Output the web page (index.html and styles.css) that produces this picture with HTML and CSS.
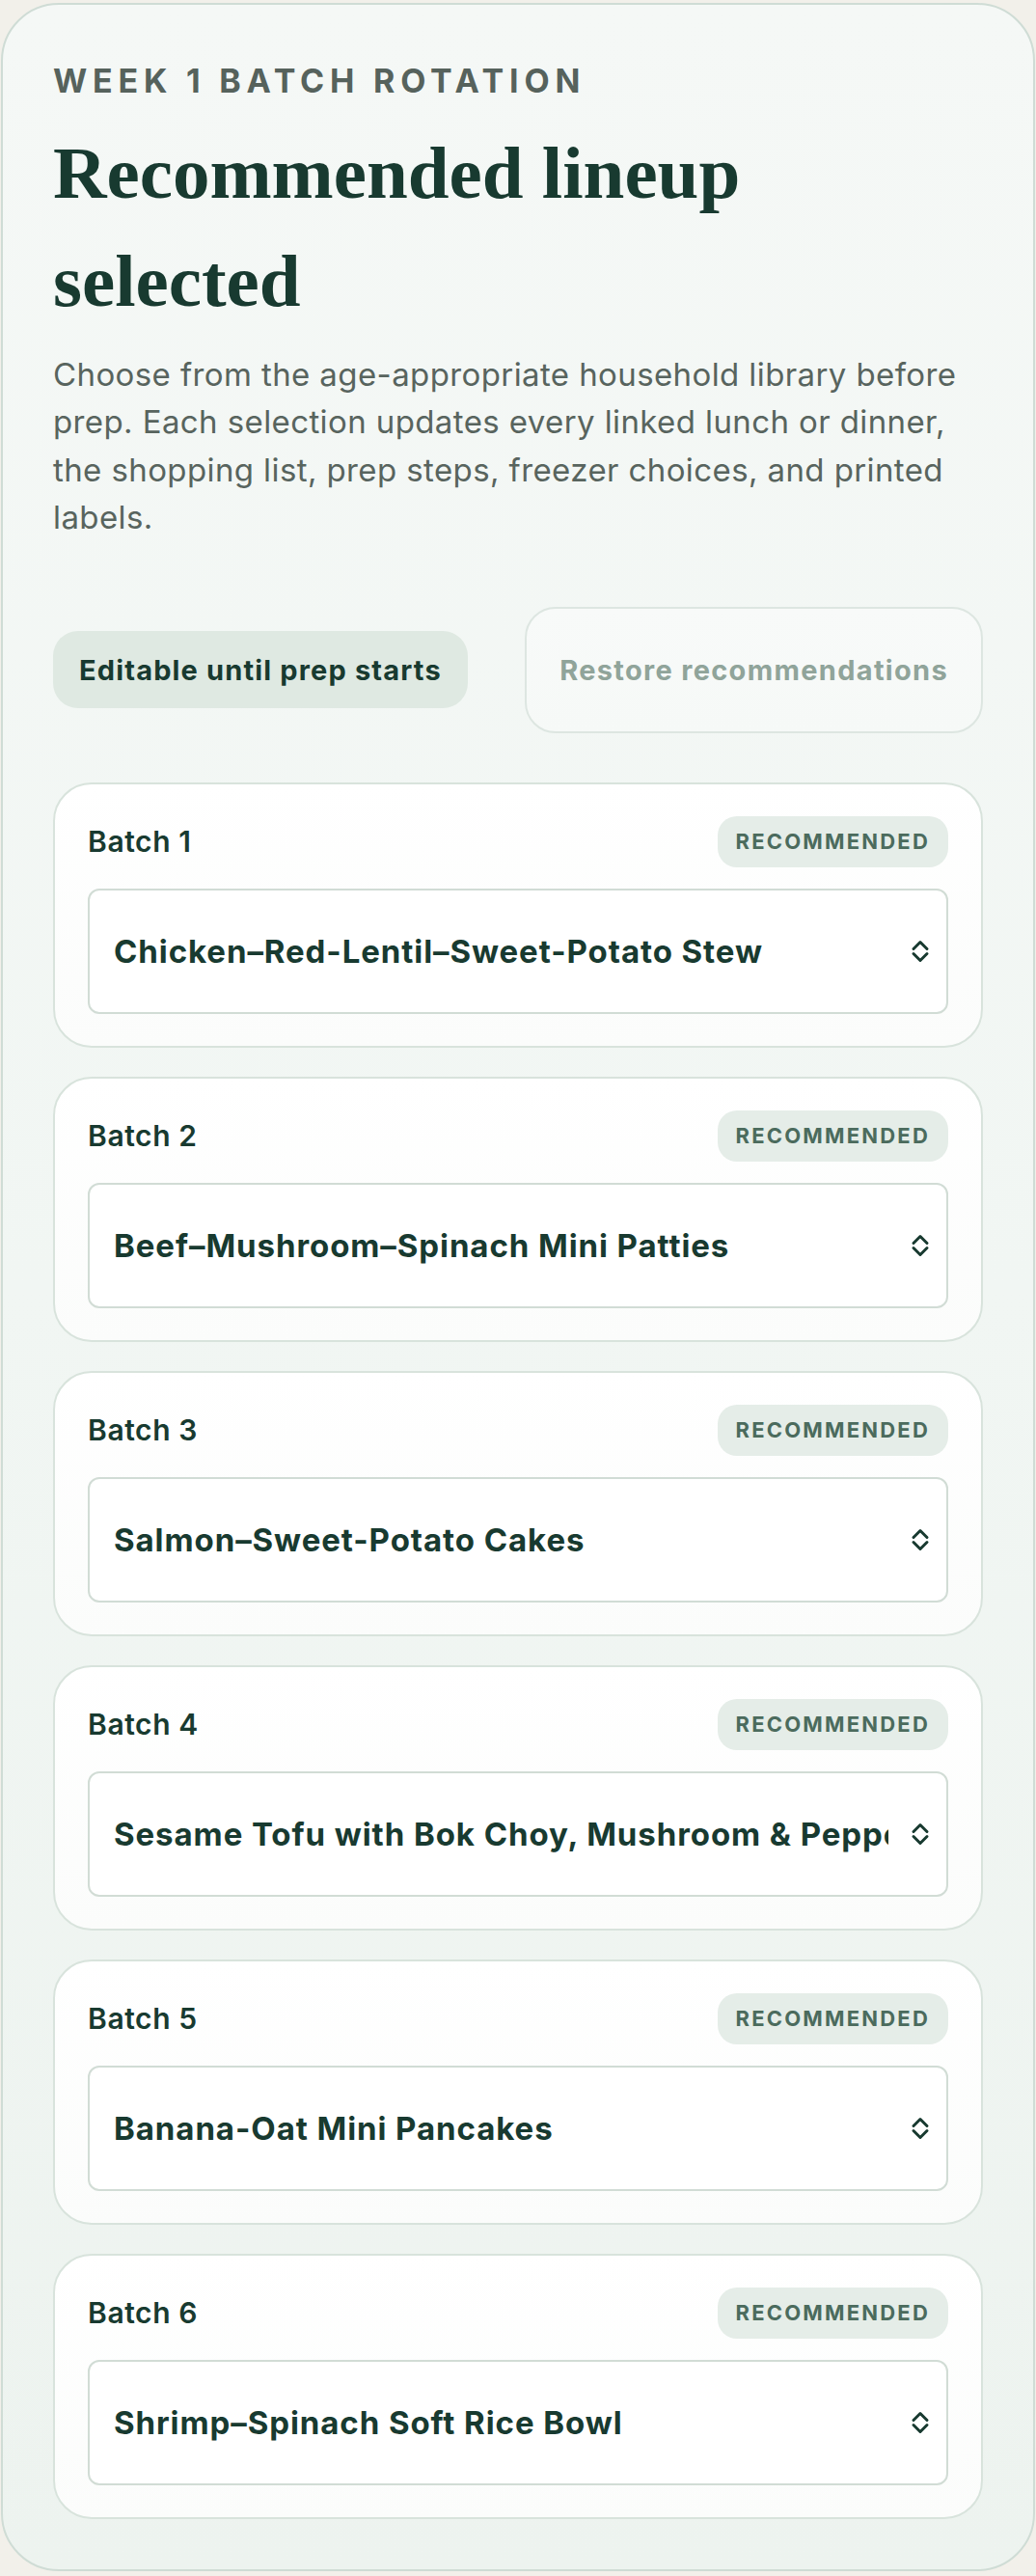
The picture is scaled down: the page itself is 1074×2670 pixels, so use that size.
FILE: index.html
```html
<!DOCTYPE html>
<html lang="en">
<head>
  <meta charset="UTF-8">
  <meta name="viewport" content="width=device-width, initial-scale=1.0">
  <title>Week 1 Batch Rotation</title>
  <link rel="stylesheet" href="styles.css">
</head>
<body>
  <div class="page">
    <section class="panel">
      <p class="eyebrow">Week 1 batch rotation</p>
      <h1>Recommended lineup selected</h1>
      <p class="intro">Choose from the age-appropriate household library before prep. Each selection updates every linked lunch or dinner, the shopping list, prep steps, freezer choices, and printed labels.</p>

      <div class="actions">
        <span class="status-pill">Editable until prep starts</span>
        <button class="restore-btn" type="button" disabled>Restore recommendations</button>
      </div>

      <div class="batch-list">
        <div class="batch">
          <div class="batch-head">
            <label for="batch1">Batch 1</label>
            <span class="badge">Recommended</span>
          </div>
          <div class="select-wrap">
            <select id="batch1">
              <option>Chicken–Red-Lentil–Sweet-Potato Stew</option>
            </select>
            <svg class="chevron" viewBox="0 0 20 26" width="20" height="26" aria-hidden="true"><path d="M3 10.5 10 3.5l7 7M3 15.5l7 7 7-7"/></svg>
          </div>
        </div>

        <div class="batch">
          <div class="batch-head">
            <label for="batch2">Batch 2</label>
            <span class="badge">Recommended</span>
          </div>
          <div class="select-wrap">
            <select id="batch2">
              <option>Beef–Mushroom–Spinach Mini Patties</option>
            </select>
            <svg class="chevron" viewBox="0 0 20 26" width="20" height="26" aria-hidden="true"><path d="M3 10.5 10 3.5l7 7M3 15.5l7 7 7-7"/></svg>
          </div>
        </div>

        <div class="batch">
          <div class="batch-head">
            <label for="batch3">Batch 3</label>
            <span class="badge">Recommended</span>
          </div>
          <div class="select-wrap">
            <select id="batch3">
              <option>Salmon–Sweet-Potato Cakes</option>
            </select>
            <svg class="chevron" viewBox="0 0 20 26" width="20" height="26" aria-hidden="true"><path d="M3 10.5 10 3.5l7 7M3 15.5l7 7 7-7"/></svg>
          </div>
        </div>

        <div class="batch">
          <div class="batch-head">
            <label for="batch4">Batch 4</label>
            <span class="badge">Recommended</span>
          </div>
          <div class="select-wrap">
            <select id="batch4">
              <option>Sesame Tofu with Bok Choy, Mushroom &amp; Pepper</option>
            </select>
            <svg class="chevron" viewBox="0 0 20 26" width="20" height="26" aria-hidden="true"><path d="M3 10.5 10 3.5l7 7M3 15.5l7 7 7-7"/></svg>
          </div>
        </div>

        <div class="batch">
          <div class="batch-head">
            <label for="batch5">Batch 5</label>
            <span class="badge">Recommended</span>
          </div>
          <div class="select-wrap">
            <select id="batch5">
              <option>Banana-Oat Mini Pancakes</option>
            </select>
            <svg class="chevron" viewBox="0 0 20 26" width="20" height="26" aria-hidden="true"><path d="M3 10.5 10 3.5l7 7M3 15.5l7 7 7-7"/></svg>
          </div>
        </div>

        <div class="batch">
          <div class="batch-head">
            <label for="batch6">Batch 6</label>
            <span class="badge">Recommended</span>
          </div>
          <div class="select-wrap">
            <select id="batch6">
              <option>Shrimp–Spinach Soft Rice Bowl</option>
            </select>
            <svg class="chevron" viewBox="0 0 20 26" width="20" height="26" aria-hidden="true"><path d="M3 10.5 10 3.5l7 7M3 15.5l7 7 7-7"/></svg>
          </div>
        </div>
      </div>
    </section>
  </div>
</body>
</html>
```

FILE: styles.css
```css
body {
  margin: 0;
  background: #f2f0ea;
  font-family: Inter, "Noto Sans", sans-serif;
  color: #183a30;
}
.page {
  padding: 3px 1px 2px;
}
.panel {
  background: linear-gradient(180deg, #f5f8f6 0%, #f1f6f3 50%, #edf3ef 100%);
  border: 2px solid #cfdcd5;
  border-radius: 60px;
  padding: 59px 52px 52px;
}
.eyebrow {
  margin: 0 0 18px;
  font-size: 34px;
  line-height: 1.2;
  font-weight: 700;
  letter-spacing: 0.17em;
  text-transform: uppercase;
  color: #56625c;
}
h1 {
  margin: 0 0 17px;
  max-width: 780px;
  font-family: "Liberation Serif", "Times New Roman", serif;
  font-size: 77px;
  line-height: 112px;
  font-weight: 700;
  color: #183a30;
}
.intro {
  margin: 0 0 67px;
  font-size: 33px;
  line-height: 1.5;
  letter-spacing: 0.012em;
  color: #58645e;
}
.actions {
  display: flex;
  justify-content: space-between;
  align-items: center;
  margin-bottom: 51px;
}
.status-pill {
  display: flex;
  align-items: center;
  height: 80px;
  padding: 0 27px;
  border-radius: 26px;
  background: #dfe9e2;
  font-size: 29px;
  font-weight: 700;
  letter-spacing: 0.04em;
  color: #183a30;
}
.restore-btn {
  height: 131px;
  padding: 0 34px;
  border: 2px solid #dde6e1;
  border-radius: 32px;
  background: linear-gradient(180deg, #f8faf9, #f6f9f7);
  font-family: inherit;
  font-size: 29px;
  font-weight: 700;
  letter-spacing: 0.045em;
  color: #90a49a;
}
.batch-list {
  display: flex;
  flex-direction: column;
  gap: 30px;
}
.batch {
  background: linear-gradient(180deg, #ffffff, #fbfcfb);
  border: 2px solid #d8e3dc;
  border-radius: 40px;
  padding: 33px 34px;
}
.batch-head {
  display: flex;
  justify-content: space-between;
  align-items: center;
  margin-bottom: 22px;
}
.batch-head label {
  font-size: 30px;
  font-weight: 600;
  letter-spacing: 0.02em;
  color: #183a30;
}
.badge {
  display: flex;
  align-items: center;
  height: 53px;
  padding: 0 19px;
  border-radius: 20px;
  background: #e5ede8;
  font-size: 22px;
  font-weight: 700;
  letter-spacing: 0.1em;
  text-transform: uppercase;
  color: #4b6b5d;
}
.select-wrap {
  position: relative;
}
.select-wrap select {
  display: block;
  width: 100%;
  height: 130px;
  padding: 0 60px 0 25px;
  border: 2px solid #d1dcd5;
  border-radius: 12px;
  background: #ffffff;
  appearance: none;
  -webkit-appearance: none;
  font-family: inherit;
  font-size: 33px;
  font-weight: 700;
  letter-spacing: 0.028em;
  color: #183a30;
}
.chevron {
  position: absolute;
  right: 19px;
  top: 52px;
  fill: none;
  stroke: #183a30;
  stroke-width: 3;
  stroke-linecap: round;
  stroke-linejoin: round;
  pointer-events: none;
}
```
